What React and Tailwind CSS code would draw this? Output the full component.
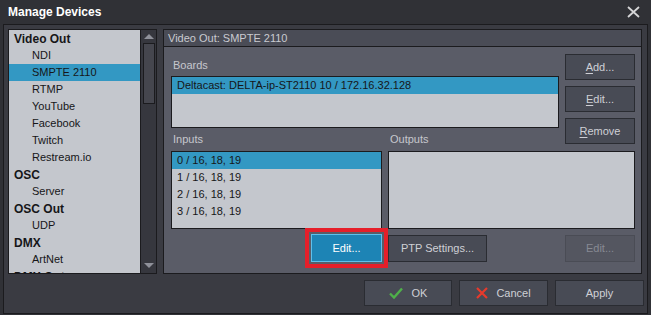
const FONT = { fontFamily: '"Liberation Sans", Arial, sans-serif' };

const TREE = [
  { label: "Video Out", head: true },
  { label: "NDI" },
  { label: "SMPTE 2110", selected: true },
  { label: "RTMP" },
  { label: "YouTube" },
  { label: "Facebook" },
  { label: "Twitch" },
  { label: "Restream.io" },
  { label: "OSC", head: true },
  { label: "Server" },
  { label: "OSC Out", head: true },
  { label: "UDP" },
  { label: "DMX", head: true },
  { label: "ArtNet" },
  { label: "DMX Out", head: true },
];

const INPUTS = ["0 / 16, 18, 19", "1 / 16, 18, 19", "2 / 16, 18, 19", "3 / 16, 18, 19"];

function Btn({ children, className = "" }) {
  return (
    <button
      className={`flex items-center justify-center border border-[#2a2c32] bg-[#484b55] text-[11px] text-[#cfd0d6] ${className}`}
    >
      {children}
    </button>
  );
}

function Accel({ c, rest }) {
  return (
    <span>
      <span className="underline underline-offset-2">{c}</span>
      {rest}
    </span>
  );
}

function TreeList() {
  return (
    <div className="flex w-[149px] shrink-0 border border-[#1b1b1e]">
      <div className="flex-1 overflow-hidden bg-[#c4c7cd]">
        {TREE.map((it) => (
          <div
            key={it.label}
            className={`flex h-[17px] items-center leading-none text-[#161618] ${
              it.head ? "pl-[5px] text-[12px] font-bold" : "pl-[23px] text-[11px]"
            } ${it.selected ? "bg-[#3398c3]" : ""}`}
          >
            {it.label}
          </div>
        ))}
      </div>
      <div className="flex w-[16px] flex-col items-center border-l border-[#1b1b1e] bg-[#36373e]">
        <svg width="10" height="6" viewBox="0 0 10 6" className="mt-[4px]">
          <polygon points="5,0 10,5 0,5" fill="#8f919a" />
        </svg>
        <div className="mt-[3px] h-[61px] w-[12px] border border-[#1b1b1e] bg-[#45464e]" />
        <div className="flex-1" />
        <svg width="10" height="6" viewBox="0 0 10 6" className="mb-[4px]">
          <polygon points="0,0 10,0 5,5" fill="#8f919a" />
        </svg>
      </div>
    </div>
  );
}

function Panel() {
  return (
    <div className="flex w-[479px] flex-col border border-[#1b1b1e] bg-[#5a5c67]">
      <div className="flex h-[17px] items-center border-b border-[#1b1b1e] bg-[#4a4c56] pl-[4px] text-[11px] text-[#c9cad0]">
        Video Out: SMPTE 2110
      </div>
      <div className="grid grid-cols-[211px_171px_70px] grid-rows-[22px_52px_23px_78px_auto] gap-x-[6px] pl-[7px] pt-[7px] text-[11px] text-[#c6c7cd]">
        <div className="col-span-2 flex items-end pb-[3px] pl-[2px]">Boards</div>
        <div className="row-span-3 flex flex-col gap-[6px]">
          <Btn className="h-[26px]">
            <Accel c="A" rest="dd..." />
          </Btn>
          <Btn className="h-[26px]">
            <Accel c="E" rest="dit..." />
          </Btn>
          <Btn className="h-[26px]">
            <Accel c="R" rest="emove" />
          </Btn>
        </div>
        <div className="col-span-2 border border-[#1b1b1e] bg-[#c4c7cd]">
          <div className="flex h-[17px] items-center bg-[#3398c3] pl-[5px] text-[#161618]">
            Deltacast: DELTA-ip-ST2110 10 / 172.16.32.128
          </div>
        </div>
        <div className="flex items-end pb-[4px] pl-[2px]">Inputs</div>
        <div className="flex items-end pb-[4px] pl-[2px]">Outputs</div>
        <div className="border border-[#1b1b1e] bg-[#c4c7cd] text-[#161618]">
          {INPUTS.map((t, i) => (
            <div
              key={t}
              className={`flex h-[17px] items-center pl-[5px] ${i === 0 ? "bg-[#3398c3]" : ""}`}
            >
              {t}
            </div>
          ))}
        </div>
        <div className="col-span-2 border border-[#1b1b1e] bg-[#c4c7cd]" />
        <div className="flex justify-end pt-[5px]">
          <button className="flex h-[28px] w-[71px] items-center justify-center border border-[#5ec0ec] bg-[#1d84b5] text-[11px] text-white outline-[4px] outline-[#e51f2a] outline-offset-[2px] outline-solid">
            Edit...
          </button>
        </div>
        <div className="pt-[6px]">
          <Btn className="h-[27px] w-[99px]">PTP Settings...</Btn>
        </div>
        <div className="pt-[6px]">
          <button className="flex h-[27px] w-[70px] items-center justify-center border border-[#4a4c55] bg-[#545660] text-[11px] text-[#878a93]">
            Edit...
          </button>
        </div>
      </div>
    </div>
  );
}

export default function App() {
  return (
    <div style={FONT} className="flex h-[315px] w-[651px] flex-col bg-[#303136]">
      <div className="flex h-[24px] items-center justify-between pl-[8px] pr-[11px]">
        <span className="text-[12px] font-bold text-white">Manage Devices</span>
        <svg width="13" height="12" viewBox="0 0 13 12">
          <path d="M1 1 L12 11 M12 1 L1 11" stroke="#d6d6d8" strokeWidth="1.8" />
        </svg>
      </div>
      <div className="mx-[3px] flex h-[290px] flex-col border border-[#1b1b1e] bg-[#3a3b42] pl-[4px] pr-[3px] pt-[4px]">
        <div className="flex h-[245px] gap-[6px]">
          <TreeList />
          <Panel />
        </div>
        <div className="mt-[6px] flex justify-end gap-[7px]">
          <Btn className="h-[26px] w-[88px] gap-[9px]">
            <svg width="14" height="12" viewBox="0 0 14 12">
              <path d="M1 6.5 L5 10.5 L13 1.5" fill="none" stroke="#4fb04a" strokeWidth="2.4" />
            </svg>
            <span>OK</span>
          </Btn>
          <Btn className="h-[26px] w-[89px] gap-[8px]">
            <svg width="12" height="12" viewBox="0 0 12 12">
              <path d="M1 1 L11 11 M11 1 L1 11" stroke="#e63a2c" strokeWidth="2.2" />
            </svg>
            <span>Cancel</span>
          </Btn>
          <Btn className="h-[26px] w-[89px]">
            <span>Apply</span>
          </Btn>
        </div>
      </div>
    </div>
  );
}
